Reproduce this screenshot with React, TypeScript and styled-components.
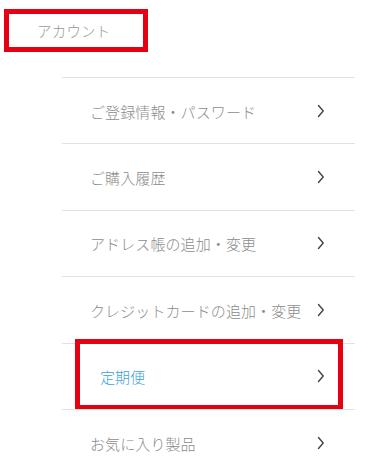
import styled, { createGlobalStyle } from 'styled-components';

const GlobalStyle = createGlobalStyle`
  html, body {
    margin: 0;
    padding: 0;
    background: #ffffff;
  }
  body {
    font-family: 'Noto Sans CJK JP', 'Noto Sans', sans-serif;
  }
`;

const Page = styled.div`
  width: 373px;
  height: 466px;
  overflow: hidden;
  background: #ffffff;
`;

const Header = styled.div`
  margin: 9px 0 0 4px;
  width: 144px;
  height: 43px;
  box-sizing: border-box;
  border: 5px solid #e60012;
  padding: 7px 0 0 28px;
  font-size: 14.5px;
  font-weight: 300;
  line-height: 20px;
  color: #999999;
  letter-spacing: 0.2px;
`;

const List = styled.ul`
  list-style: none;
  margin: 25px 0 0 62px;
  padding: 0;
  width: 293px;
`;

const Row = styled.li<{ $active?: boolean }>`
  position: relative;
  display: flex;
  align-items: center;
  justify-content: space-between;
  height: 65.4px;
  border-top: 1px solid #e2e2e2;
  padding: 0 30px 0 ${({ $active }) => ($active ? '38px' : '28px')};
  font-size: 15px;
  font-weight: 300;
  color: ${({ $active }) => ($active ? '#3b9fd9' : '#8c8c8c')};
  letter-spacing: 0.1px;
`;

const Label = styled.span`
  line-height: 20px;
  margin-top: 2px;
`;

const Highlight = styled.span`
  position: absolute;
  top: -5px;
  left: 13px;
  right: 12px;
  bottom: -1px;
  border: 5px solid #e60012;
  pointer-events: none;
`;

const Chevron = () => (
  <svg width="8" height="14" viewBox="0 0 8 14" fill="none">
    <path d="M1.5 1.5 L6.2 7 L1.5 12.5" stroke="#444" strokeWidth="1.4" strokeLinecap="round" strokeLinejoin="round" />
  </svg>
);

const items = [
  { label: 'ご登録情報・パスワード' },
  { label: 'ご購入履歴' },
  { label: 'アドレス帳の追加・変更' },
  { label: 'クレジットカードの追加・変更' },
  { label: '定期便', active: true },
  { label: 'お気に入り製品' },
];

export default function App() {
  return (
    <Page>
      <GlobalStyle />
      <Header>アカウント</Header>
      <List>
        {items.map((item) => (
          <Row key={item.label} $active={item.active}>
            <Label>{item.label}</Label>
            <Chevron />
            {item.active && <Highlight />}
          </Row>
        ))}
      </List>
    </Page>
  );
}
